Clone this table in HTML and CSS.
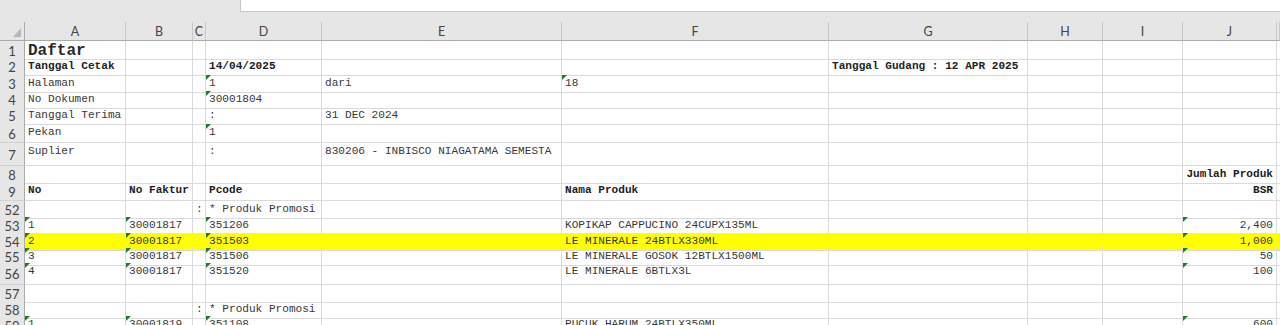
FILE: index.html
```html
<!DOCTYPE html>
<html lang="id">
<head>
<meta charset="utf-8">
<title>Daftar</title>
<link rel="stylesheet" href="styles.css">
</head>
<body>
<div class="topbar"><div class="fbox"></div></div>
<div class="sheet">
  <div class="row colhead">
    <div class="ch corner"></div>
    <div class="ch">A</div><div class="ch">B</div><div class="ch">C</div><div class="ch">D</div><div class="ch">E</div><div class="ch">F</div><div class="ch">G</div><div class="ch">H</div><div class="ch">I</div><div class="ch">J</div><div class="ch"></div>
  </div>

  <div class="row h17">
    <div class="rh">1</div>
    <div class="c big">Daftar</div><div class="c"></div><div class="c"></div><div class="c"></div><div class="c"></div><div class="c"></div><div class="c"></div><div class="c"></div><div class="c"></div><div class="c"></div><div class="c"></div>
  </div>
  <div class="row h17">
    <div class="rh">2</div>
    <div class="c b">Tanggal Cetak</div><div class="c"></div><div class="c"></div><div class="c b">14/04/2025</div><div class="c"></div><div class="c"></div><div class="c b">Tanggal Gudang : 12 APR 2025</div><div class="c"></div><div class="c"></div><div class="c"></div><div class="c"></div>
  </div>
  <div class="row h16">
    <div class="rh">3</div>
    <div class="c">Halaman</div><div class="c"></div><div class="c"></div><div class="c t">1</div><div class="c">dari</div><div class="c t">18</div><div class="c"></div><div class="c"></div><div class="c"></div><div class="c"></div><div class="c"></div>
  </div>
  <div class="row h16">
    <div class="rh">4</div>
    <div class="c">No Dokumen</div><div class="c"></div><div class="c"></div><div class="c t">30001804</div><div class="c"></div><div class="c"></div><div class="c"></div><div class="c"></div><div class="c"></div><div class="c"></div><div class="c"></div>
  </div>
  <div class="row h17">
    <div class="rh">5</div>
    <div class="c">Tanggal Terima</div><div class="c"></div><div class="c"></div><div class="c">:</div><div class="c">31 DEC 2024</div><div class="c"></div><div class="c"></div><div class="c"></div><div class="c"></div><div class="c"></div><div class="c"></div>
  </div>
  <div class="row h19">
    <div class="rh">6</div>
    <div class="c">Pekan</div><div class="c"></div><div class="c"></div><div class="c t">1</div><div class="c"></div><div class="c"></div><div class="c"></div><div class="c"></div><div class="c"></div><div class="c"></div><div class="c"></div>
  </div>
  <div class="row h23">
    <div class="rh">7</div>
    <div class="c">Suplier</div><div class="c"></div><div class="c"></div><div class="c">:</div><div class="c">830206 - INBISCO NIAGATAMA SEMESTA</div><div class="c"></div><div class="c"></div><div class="c"></div><div class="c"></div><div class="c"></div><div class="c"></div>
  </div>
  <div class="row h16">
    <div class="rh">8</div>
    <div class="c"></div><div class="c"></div><div class="c"></div><div class="c"></div><div class="c"></div><div class="c"></div><div class="c"></div><div class="c"></div><div class="c"></div><div class="c b r">Jumlah Produk</div><div class="c"></div>
  </div>
  <div class="row h19">
    <div class="rh">9</div>
    <div class="c b">No</div><div class="c b">No Faktur</div><div class="c"></div><div class="c b">Pcode</div><div class="c"></div><div class="c b">Nama Produk</div><div class="c"></div><div class="c"></div><div class="c"></div><div class="c b r">BSR</div><div class="c"></div>
  </div>
  <div class="row h16">
    <div class="rh">52</div>
    <div class="c"></div><div class="c"></div><div class="c">:</div><div class="c">* Produk Promosi</div><div class="c"></div><div class="c"></div><div class="c"></div><div class="c"></div><div class="c"></div><div class="c"></div><div class="c"></div>
  </div>
  <div class="row h16">
    <div class="rh">53</div>
    <div class="c t">1</div><div class="c t">30001817</div><div class="c"></div><div class="c t">351206</div><div class="c"></div><div class="c">KOPIKAP CAPPUCINO 24CUPX135ML</div><div class="c"></div><div class="c"></div><div class="c"></div><div class="c t r">2,400</div><div class="c"></div>
  </div>
  <div class="row h15 hl">
    <div class="rh">54</div>
    <div class="c t">2</div><div class="c t">30001817</div><div class="c"></div><div class="c t">351503</div><div class="c"></div><div class="c">LE MINERALE 24BTLX330ML</div><div class="c"></div><div class="c"></div><div class="c"></div><div class="c t r">1,000</div><div class="c"></div>
  </div>
  <div class="row h15">
    <div class="rh">55</div>
    <div class="c t">3</div><div class="c t">30001817</div><div class="c"></div><div class="c t">351506</div><div class="c"></div><div class="c">LE MINERALE GOSOK 12BTLX1500ML</div><div class="c"></div><div class="c"></div><div class="c"></div><div class="c t r">50</div><div class="c"></div>
  </div>
  <div class="row h22">
    <div class="rh">56</div>
    <div class="c t">4</div><div class="c t">30001817</div><div class="c"></div><div class="c t">351520</div><div class="c"></div><div class="c">LE MINERALE 6BTLX3L</div><div class="c"></div><div class="c"></div><div class="c"></div><div class="c t r">100</div><div class="c"></div>
  </div>
  <div class="row h16">
    <div class="rh">57</div>
    <div class="c"></div><div class="c"></div><div class="c"></div><div class="c"></div><div class="c"></div><div class="c"></div><div class="c"></div><div class="c"></div><div class="c"></div><div class="c"></div><div class="c"></div>
  </div>
  <div class="row h15">
    <div class="rh">58</div>
    <div class="c"></div><div class="c"></div><div class="c">:</div><div class="c">* Produk Promosi</div><div class="c"></div><div class="c"></div><div class="c"></div><div class="c"></div><div class="c"></div><div class="c"></div><div class="c"></div>
  </div>
  <div class="row h20">
    <div class="rh">59</div>
    <div class="c t">1</div><div class="c t">30001819</div><div class="c"></div><div class="c t">351108</div><div class="c"></div><div class="c">PUCUK HARUM 24BTLX350ML</div><div class="c"></div><div class="c"></div><div class="c"></div><div class="c t r">600</div><div class="c"></div>
  </div>
</div>
</body>
</html>
```

FILE: styles.css
```css
html, body {
  margin: 0;
  padding: 0;
}
body {
  width: 1280px;
  height: 325px;
  overflow: hidden;
  background: #ffffff;
  font-family: "Liberation Mono", "Courier New", monospace;
  color: #383838;
}

.topbar {
  height: 22px;
  background: #e6e6e6;
}
.fbox {
  margin-left: 240px;
  height: 12px;
  box-sizing: border-box;
  background: #ffffff;
  border-left: 1px solid #c6c6c6;
  border-bottom: 1px solid #c6c6c6;
}

.sheet {
  display: flex;
  flex-direction: column;
}

.row {
  display: grid;
  grid-template-columns: 25px 101px 67px 13px 116px 240px 267px 199px 75px 80px 94px 1fr;
}
.colhead { height: 19px; }
.h15 { height: 15px; }
.h16 { height: 16px; }
.h17 { height: 17px; }
.h19 { height: 19px; }
.h20 { height: 20px; }
.h22 { height: 22px; }
.h23 { height: 23px; }

.ch {
  box-sizing: border-box;
  background: #e6e6e6;
  border-right: 1px solid #c8c8c8;
  border-bottom: 1px solid #ababab;
  display: flex;
  align-items: center;
  justify-content: center;
  font-family: Lato, "Liberation Sans", sans-serif;
  font-size: 12.5px;
  color: #444444;
  padding-top: 1px;
}
.corner {
  position: relative;
  border-right-color: #ababab;
}
.corner::after {
  content: "";
  position: absolute;
  right: 3px;
  bottom: 3px;
  width: 0;
  height: 0;
  border-bottom: 9px solid #b8b8b8;
  border-left: 8px solid transparent;
}

.rh {
  box-sizing: border-box;
  background: #e6e6e6;
  border-right: 1px solid #ababab;
  border-bottom: 1px solid #d2d2d2;
  display: flex;
  align-items: center;
  justify-content: center;
  font-family: Lato, "Liberation Sans", sans-serif;
  font-size: 13px;
  color: #444444;
  padding-top: 1px;
}

.c {
  box-sizing: border-box;
  position: relative;
  min-width: 0;
  border-right: 1px solid #dadada;
  border-bottom: 1px solid #dadada;
  padding: 2px 3px 0 3px;
  font-size: 11.1px;
  line-height: 12px;
  white-space: nowrap;
}
.b { font-weight: bold; color: #222222; }
.r { text-align: right; }
.big {
  font-size: 16px;
  line-height: 16px;
  font-weight: bold;
  color: #2a2a2a;
}
.t::before {
  content: "";
  position: absolute;
  left: 0;
  top: 0;
  width: 0;
  height: 0;
  border-top: 5px solid #1f7a30;
  border-right: 5px solid transparent;
}

.hl .c {
  background: #ffff00;
  border-right-color: #ffff00;
}
```
